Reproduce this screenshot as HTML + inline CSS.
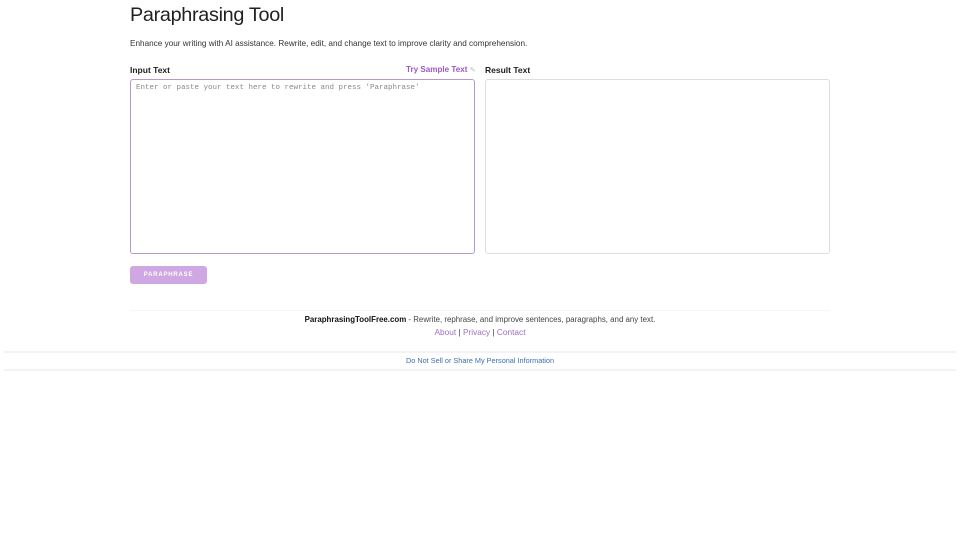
<!DOCTYPE html>
<html><head><meta charset="utf-8"><style>
body{margin:0;background:#fff;font-family:"Liberation Sans",sans-serif;color:#212121;width:960px;height:540px;overflow:hidden;position:relative}
.a{position:absolute}
h1{position:absolute;left:130px;top:4px;margin:0;font-size:19.8px;font-weight:400;letter-spacing:-0.3px}
.box{position:absolute;top:79px;width:343px;height:173px;border:1px solid #ddd;border-radius:3px}
</style></head><body>
<h1>Paraphrasing Tool</h1>
<div class="a" style="left:130px;top:39px;font-size:8.2px;color:#333">Enhance your writing with AI assistance. Rewrite, edit, and change text to improve clarity and comprehension.</div>
<div class="a" style="left:130px;top:65px;font-size:8.5px;font-weight:bold">Input Text</div>
<div class="a" style="left:406px;top:65px;font-size:8.1px;font-weight:bold;color:#9b59c6">Try Sample Text <span style="font-weight:normal;color:#bbb;font-size:7px">✎</span></div>
<div class="a" style="left:485px;top:65px;font-size:8.5px;font-weight:bold">Result Text</div>
<div class="box" style="left:130px;border-color:#b79ac9"><div style="margin:4px 5px;font-family:'Liberation Mono',monospace;font-size:7.5px;color:#888">Enter or paste your text here to rewrite and press 'Paraphrase'</div></div>
<div class="box" style="left:485px"></div>
<div class="a" style="left:130px;top:266px;width:77px;height:18px;background:#cfa7e3;border-radius:3px;color:#fff;font-size:6px;font-weight:bold;letter-spacing:0.8px;text-align:center;line-height:18px">PARAPHRASE</div>
<div class="a" style="left:130px;top:310px;width:700px;border-top:1px solid #f5f5f5"></div>
<div class="a" style="left:0;width:960px;top:315px;text-align:center;font-size:7.9px;color:#444"><b style="color:#111">ParaphrasingToolFree.com</b> - Rewrite, rephrase, and improve sentences, paragraphs, and any text.</div>
<div class="a" style="left:0;width:960px;top:327px;text-align:center;font-size:8.3px;color:#444"><span style="color:#a06fc0">About</span> | <span style="color:#a06fc0">Privacy</span> | <span style="color:#a06fc0">Contact</span></div>
<div class="a" style="left:4px;top:351px;width:952px;height:16px;border-top:2px solid #f3f3f3;border-bottom:2px solid #f3f3f3;text-align:center;font-size:7.3px;color:#3a6fb0;line-height:16px">Do Not Sell or Share My Personal Information</div>
</body></html>
